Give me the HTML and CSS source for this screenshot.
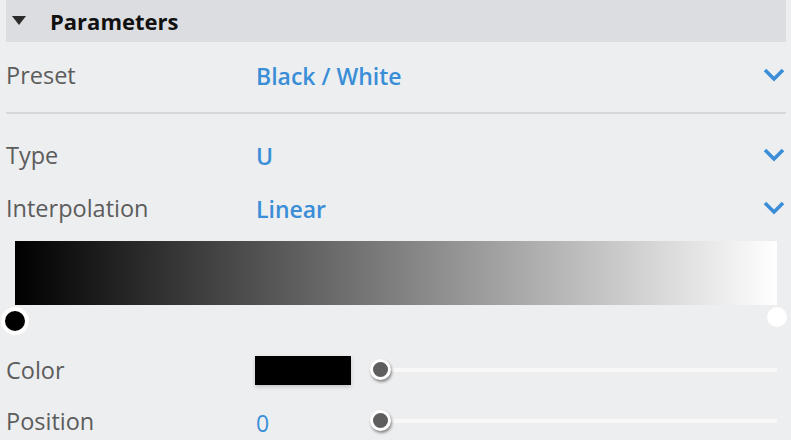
FILE: index.html
```html
<!DOCTYPE html>
<html>
<head>
<meta charset="utf-8">
<link rel="stylesheet" href="styles.css">
</head>
<body>
<div class="panel">
  <div class="header">
    <span class="caret"></span>
    <span class="title">Parameters</span>
  </div>
  <div class="row row-preset">
    <span class="label">Preset</span>
    <span class="value">Black / White</span>
    <svg class="chev" viewBox="0 0 22 14" width="22" height="14"><path d="M2 2 L11 11 L20 2" fill="none" stroke="#3a8ed8" stroke-width="3.6"/></svg>
  </div>
  <div class="sep"></div>
  <div class="row row-type">
    <span class="label">Type</span>
    <span class="value">U</span>
    <svg class="chev" viewBox="0 0 22 14" width="22" height="14"><path d="M2 2 L11 11 L20 2" fill="none" stroke="#3a8ed8" stroke-width="3.6"/></svg>
  </div>
  <div class="row">
    <span class="label">Interpolation</span>
    <span class="value">Linear</span>
    <svg class="chev" viewBox="0 0 22 14" width="22" height="14"><path d="M2 2 L11 11 L20 2" fill="none" stroke="#3a8ed8" stroke-width="3.6"/></svg>
  </div>
  <div class="gradient-wrap">
    <div class="gradient"></div>
    <div class="stops">
      <span class="stop stop-black"></span>
      <span class="stop stop-white"></span>
    </div>
  </div>
  <div class="row row-slider row-color">
    <span class="label">Color</span>
    <span class="vbox"><span class="swatch"></span></span>
    <div class="slider"><span class="track"></span><span class="knob"></span></div>
  </div>
  <div class="row row-slider">
    <span class="label">Position</span>
    <span class="vbox"><span class="num">0</span></span>
    <div class="slider"><span class="track"></span><span class="knob"></span></div>
  </div>
</div>
</body>
</html>
```

FILE: styles.css
```css
* { box-sizing: border-box; }
html, body { margin: 0; padding: 0; }
body {
  background: #edeef0;
  font-family: "Open Sans", "Noto Sans", sans-serif;
  width: 791px;
  height: 440px;
  overflow: hidden;
}
.panel {
  padding: 0 5px 0 6px;
}
.header {
  height: 42px;
  background: #dcdde0;
  display: flex;
  align-items: center;
}
.caret {
  width: 0; height: 0;
  border-left: 7px solid transparent;
  border-right: 7px solid transparent;
  border-top: 9px solid #2b2b2b;
  margin-left: 6px;
  margin-right: 24px;
  margin-top: -2px;
}
.title {
  font-weight: 700;
  font-size: 22px;
  color: #111;
}
.row {
  display: flex;
  align-items: center;
  height: 52px;
}
.row-preset { height: 66px; margin-bottom: 4px; }
.row-type { margin-top: 14px; height: 54px; }
.label {
  width: 250px;
  font-size: 23.5px;
  color: #5c5c5c;
  line-height: 1;
  padding-top: 2px;
}
.value {
  flex: 1;
  font-size: 23px;
  font-weight: 600;
  color: #3a8ed8;
  line-height: 1;
  padding-top: 2px;
}
.chev { margin-right: 1px; }
.sep {
  height: 2px;
  background: #d6d7da;
}
.gradient-wrap {
  margin: 7px 9px 0 9px;
}
.gradient {
  height: 64px;
  background: linear-gradient(to right, #000 0%, #fff 100%);
}
.stops {
  position: relative;
  height: 40px;
}
.stop {
  position: absolute;
  border-radius: 50%;
}
.stop-black {
  left: -14px;
  top: 2px;
  width: 28px;
  height: 28px;
  background: #000;
  border: 4px solid #fff;
}
.stop-white {
  right: -10px;
  top: 2px;
  width: 20px;
  height: 20px;
  background: #fff;
}
.row-color { height: 50px; }
.vbox {
  width: 114px;
  display: flex;
  align-items: center;
}
.swatch {
  width: 96px;
  height: 29px;
  background: #000;
  margin-left: -1px;
  box-shadow: 0 2px 4px rgba(0,0,0,0.18);
}
.num {
  font-size: 23px;
  color: #3a8ed8;
  line-height: 1;
  padding-top: 4px;
}
.slider {
  flex: 1;
  position: relative;
  height: 22px;
  margin-right: 9px;
}
.track {
  position: absolute;
  left: 10px;
  right: 0;
  top: 9px;
  height: 4px;
  background: #f8f8f9;
}
.knob {
  position: absolute;
  left: 0;
  top: 0;
  width: 21px;
  height: 21px;
  border-radius: 50%;
  background: #5e5e5e;
  border: 3px solid #fff;
  box-shadow: 1px 2px 3px rgba(0,0,0,0.45);
}
```
